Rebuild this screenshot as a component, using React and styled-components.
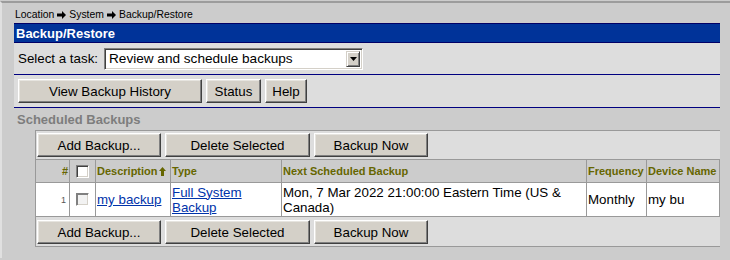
import React from "react";
import styled, { createGlobalStyle } from "styled-components";

const Global = createGlobalStyle`
  html, body { margin: 0; padding: 0; }
  body {
    background: #cccccc;
    font-family: "Liberation Sans", Arial, sans-serif;
    color: #000;
  }
`;

const Frame = styled.div`
  margin-top: 1px;
  border-top: 2px solid #9c9c9c;
  border-left: 2px solid #e0e0e0;
  min-height: 257px;
  box-sizing: border-box;
  padding-left: 12px;
`;

const Content = styled.div`
  width: 706px;
`;

const Breadcrumb = styled.div`
  height: 20px;
  box-sizing: border-box;
  padding: 3px 0 0 1px;
  display: flex;
  align-items: center;
  gap: 3px;
  font-size: 10.4px;
`;

const TitleBar = styled.div`
  height: 20px;
  box-sizing: border-box;
  border-top: 1px solid #000066;
  border-bottom: 1px solid #000066;
  background: #003399;
  color: #fff;
  font-weight: bold;
  font-size: 13px;
  display: flex;
  align-items: center;
  padding-left: 2px;
`;

const Panel = styled.div`
  background: #dddddd;
  border-bottom: 1px solid #000080;
`;

const Row = styled.div`
  display: flex;
  align-items: center;
  gap: ${(p) => p.$gap || 4}px;
  height: ${(p) => p.$h}px;
  padding-left: ${(p) => p.$pl || 0}px;
  box-sizing: border-box;
  border-bottom: ${(p) => (p.$rule ? "1px solid #000080" : "none")};
`;

const Label = styled.span`
  font-size: 13.33px;
`;

const SelectBox = styled.div`
  width: 259px;
  height: 22px;
  box-sizing: border-box;
  background: #fff;
  border: 1px solid;
  border-color: #808080 #ffffff #ffffff #808080;
  box-shadow: inset 1px 1px #404040, inset -1px -1px #d4d0c8;
  display: flex;
  align-items: center;
  justify-content: space-between;
  padding: 0 2px 0 4px;
  font-size: 13.6px;
`;

const ArrowButton = styled.div`
  width: 14px;
  height: 16px;
  box-sizing: border-box;
  background: #d4d0c8;
  border: 1px solid;
  border-color: #d4d0c8 #404040 #404040 #d4d0c8;
  box-shadow: inset 1px 1px #fff, inset -1px -1px #808080;
  display: flex;
  align-items: center;
  justify-content: center;
`;

const Button = styled.button`
  width: ${(p) => p.$w}px;
  height: 24px;
  box-sizing: border-box;
  margin: 0;
  padding: 0;
  background: #d4d0c8;
  border: 1px solid;
  border-color: #ffffff #404040 #404040 #ffffff;
  box-shadow: inset -1px -1px #808080, inset 1px 1px #e6e4df;
  font-family: "Liberation Sans", Arial, sans-serif;
  font-size: 13.33px;
  color: #000;
  cursor: pointer;
`;

const SectionTitle = styled.div`
  height: 22px;
  display: flex;
  align-items: center;
  padding-left: 3px;
  font-size: 13px;
  font-weight: bold;
  color: #7d7d7d;
`;

const Box = styled.div`
  margin-left: 21px;
  width: 685px;
  box-sizing: border-box;
  background: #dddddd;
  border-top: 1px solid #999;
  border-bottom: 1px solid #999;
  border-left: 1px solid #999;
  padding: 2px 0 2px 0;
  display: flex;
  flex-direction: column;
  gap: 2px;
`;

const BoxButtons = styled.div`
  display: flex;
  gap: 4px;
  padding-left: 1px;
  margin-top: ${(p) => p.$mt || 0}px;
`;

const Table = styled.table`
  border-collapse: collapse;
  table-layout: fixed;
  width: 685px;
  margin-left: -1px;
  font-size: 13.33px;
`;

const Th = styled.th`
  background: #cccccc;
  border: 1px solid #999;
  height: 22px;
  padding: 0 1px;
  font-size: 11px;
  font-weight: bold;
  color: #666600;
  text-align: ${(p) => p.$align || "left"};
  white-space: nowrap;
  overflow: hidden;
  vertical-align: middle;
`;

const Td = styled.td`
  background: #fff;
  border: 1px solid #999;
  height: 33px;
  padding: 0 ${(p) => p.$pr ?? 1}px 0 1px;
  line-height: 15px;
  text-align: ${(p) => p.$align || "left"};
  vertical-align: middle;
  overflow: hidden;
  white-space: ${(p) => (p.$nowrap ? "nowrap" : "normal")};
`;

const RowNum = styled.span`
  font-size: 9px;
  color: #555;
`;

const Link = styled.a`
  color: #0033aa;
  text-decoration: underline;
`;

const Check = styled.span`
  display: inline-block;
  width: 13px;
  height: 13px;
  box-sizing: border-box;
  vertical-align: middle;
  background: ${(p) => (p.$dim ? "#f2f2f2" : "#fff")};
  border: 1px solid;
  border-color: #808080 #fff #fff #808080;
  box-shadow: ${(p) =>
    p.$dim
      ? "inset 1px 1px #808080, inset -1px -1px #d4d0c8"
      : "inset 1px 1px #404040, inset -1px -1px #d4d0c8"};
`;

const CenterCell = styled.div`
  display: flex;
  justify-content: center;
  align-items: center;
`;

const HeadLabel = styled.span`
  display: inline-flex;
  align-items: center;
  gap: 1px;
`;

const CrumbArrow = () => (
  <svg width="9" height="8" viewBox="0 0 9 8">
    <path d="M0 2.5h5V0l4 4-4 4V5.5H0z" fill="#000" />
  </svg>
);

const SortUp = () => (
  <svg width="7" height="9" viewBox="0 0 7 9">
    <path d="M3.5 0L7 4H5v5H2V4H0z" fill="#666600" />
  </svg>
);

const DropTri = () => (
  <svg width="7" height="4" viewBox="0 0 7 4">
    <path d="M0 0h7L3.5 4z" fill="#000" />
  </svg>
);

const cols = [34, 26, 75, 111, 305, 60, 73];

const ActionButtons = ({ mt }) => (
  <BoxButtons $mt={mt}>
    <Button $w={124}>Add Backup...</Button>
    <Button $w={145}>Delete Selected</Button>
    <Button $w={114}>Backup Now</Button>
  </BoxButtons>
);

export default function App() {
  return (
    <>
      <Global />
      <Frame>
        <Content>
          <Breadcrumb>
            <span>Location</span>
            <CrumbArrow />
            <span>System</span>
            <CrumbArrow />
            <span>Backup/Restore</span>
          </Breadcrumb>
          <TitleBar>Backup/Restore</TitleBar>
          <Panel>
            <Row $h={32} $pl={4} $gap={6} $rule>
              <Label>Select a task:</Label>
              <SelectBox>
                <span>Review and schedule backups</span>
                <ArrowButton>
                  <DropTri />
                </ArrowButton>
              </SelectBox>
            </Row>
            <Row $h={32} $pl={4}>
              <Button $w={184}>View Backup History</Button>
              <Button $w={55}>Status</Button>
              <Button $w={42}>Help</Button>
            </Row>
          </Panel>
          <SectionTitle>Scheduled Backups</SectionTitle>
          <Box>
            <ActionButtons />
            <Table>
              <colgroup>
                {cols.map((w, i) => (
                  <col key={i} style={{ width: w }} />
                ))}
              </colgroup>
              <thead>
                <tr>
                  <Th $align="right">#</Th>
                  <Th>
                    <CenterCell>
                      <Check />
                    </CenterCell>
                  </Th>
                  <Th>
                    <HeadLabel>
                      Description
                      <SortUp />
                    </HeadLabel>
                  </Th>
                  <Th>Type</Th>
                  <Th>Next Scheduled Backup</Th>
                  <Th>Frequency</Th>
                  <Th>Device Name</Th>
                </tr>
              </thead>
              <tbody>
                <tr>
                  <Td $align="right" $pr={3}>
                    <RowNum>1</RowNum>
                  </Td>
                  <Td>
                    <CenterCell>
                      <Check $dim />
                    </CenterCell>
                  </Td>
                  <Td $nowrap>
                    <Link href="#">my backup</Link>
                  </Td>
                  <Td>
                    <Link href="#">Full System Backup</Link>
                  </Td>
                  <Td>Mon, 7 Mar 2022 21:00:00 Eastern Time (US &amp; Canada)</Td>
                  <Td $nowrap>Monthly</Td>
                  <Td $nowrap>my bu</Td>
                </tr>
              </tbody>
            </Table>
            <ActionButtons mt={1} />
          </Box>
        </Content>
      </Frame>
    </>
  );
}
